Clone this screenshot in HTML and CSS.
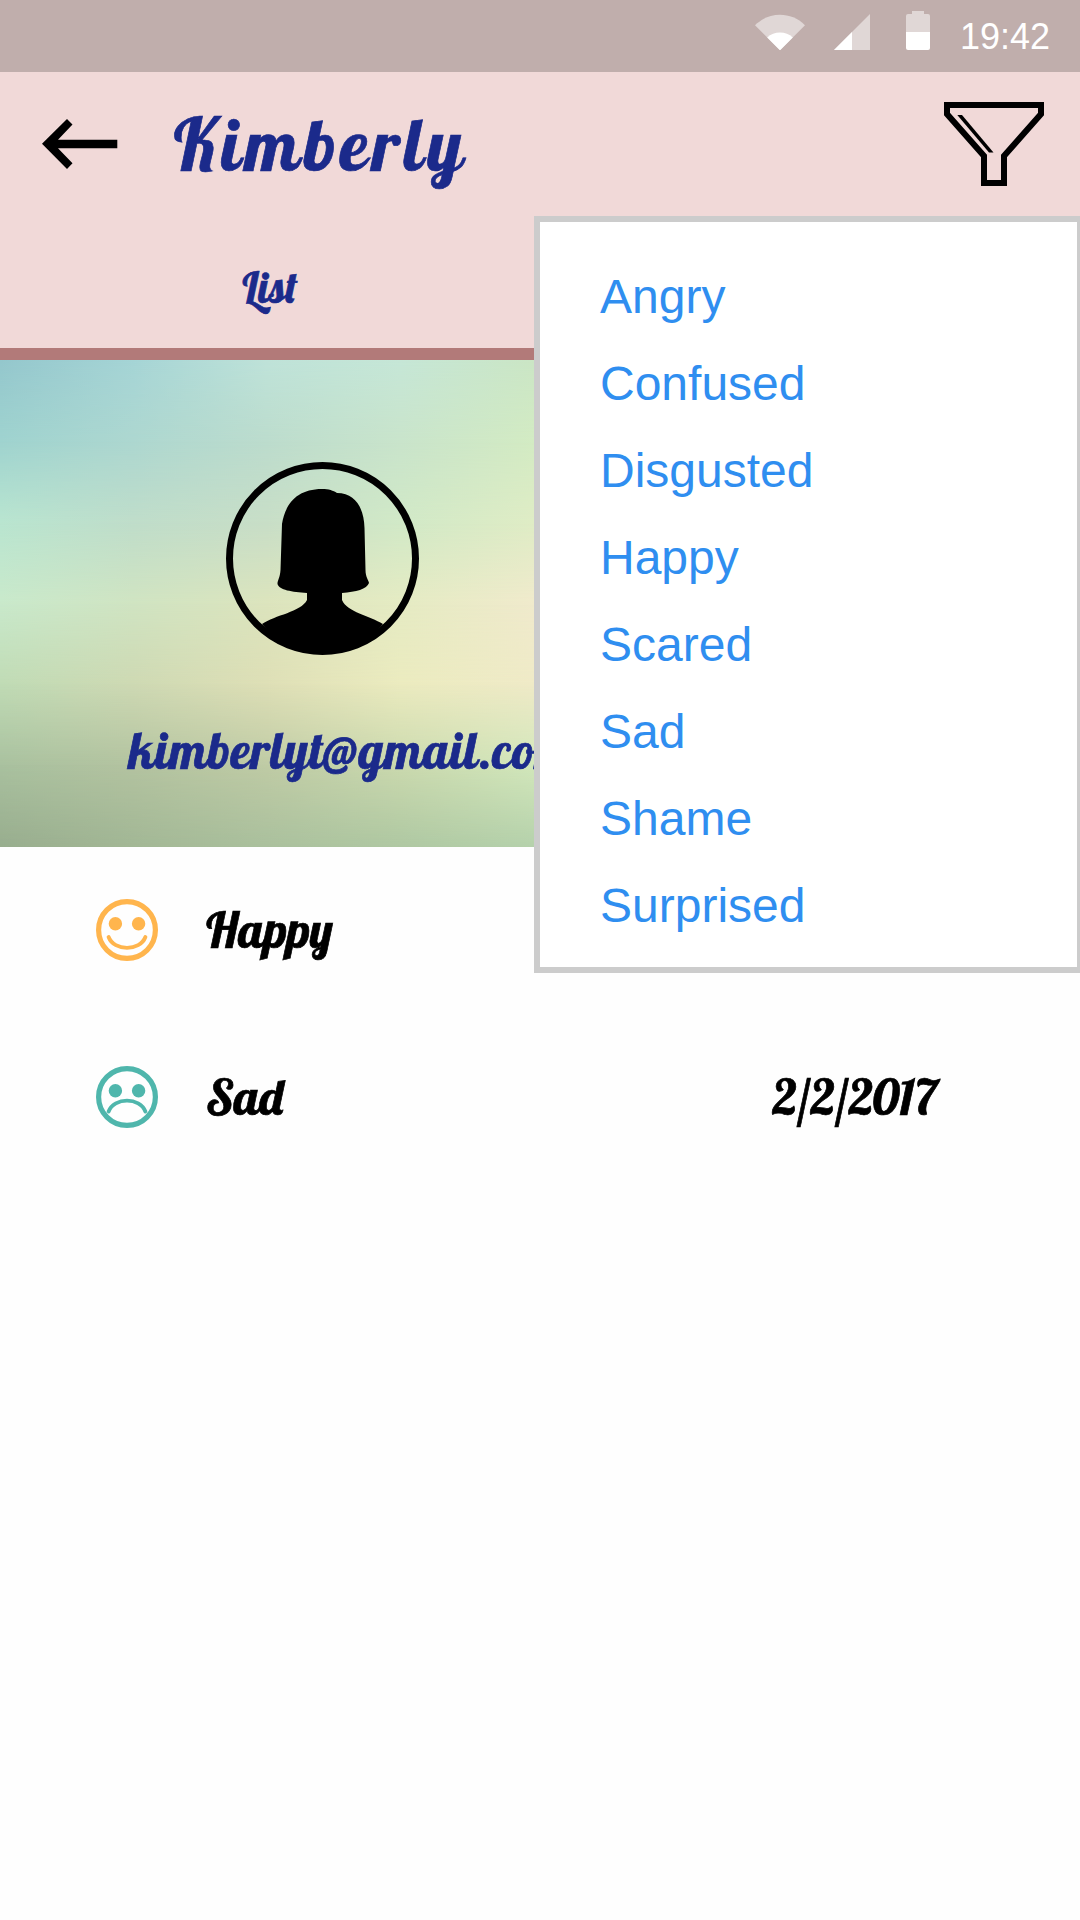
FILE: index.html
```html
<!DOCTYPE html>
<html lang="en">
<head>
<meta charset="utf-8">
<title>Kimberly</title>
<link rel="stylesheet" href="styles.css">
</head>
<body>
<div class="screen">
  <div class="status-bar">
    <svg class="wifi" width="50" height="40" viewBox="0 0 50 40">
      <path d="M0 15.2C14 1.3 36 1.3 50 15.2L25 40.3Z" fill="#fff" fill-opacity=".5"/>
      <path d="M12.2 27.4C19 20.7 31 20.7 37.8 27.4L25 40.3Z" fill="#fff"/>
    </svg>
    <svg class="signal" width="36" height="40" viewBox="0 0 36 40">
      <path d="M0 40L36 4V40Z" fill="#fff" fill-opacity=".5"/>
      <path d="M0 40L18 22V40Z" fill="#fff"/>
    </svg>
    <svg class="battery" width="24" height="40" viewBox="0 0 24 40">
      <path d="M6 1H18V4H22Q24 4 24 6V22H0V6Q0 4 2 4H6Z" fill="#fff" fill-opacity=".5"/>
      <path d="M0 22H24V38Q24 40 22 40H2Q0 40 0 38Z" fill="#fff"/>
    </svg>
    <span class="clock">19:42</span>
  </div>

  <header class="header">
    <div class="title-row">
      <svg class="back" width="76" height="52" viewBox="0 0 76 52">
        <path d="M0 25.7L25 1L30.5 6.5L16 21.7H75.3V30.2H16L30.5 45.2L25 51Z"/>
      </svg>
      <h1 class="title">Kimberly</h1>
      <svg class="filter" width="100" height="84" viewBox="0 0 100 84">
        <path d="M3 3H97V12L60 54V81H40V54L3 12Z" fill="none" stroke="#000" stroke-width="6"/>
        <path d="M13.3 13H18L49.5 50.5H45Z"/>
      </svg>
    </div>
    <nav class="tabs"><span class="tab">List</span></nav>
  </header>

  <section class="profile">
    <svg class="backdrop" viewBox="0 0 534 487" preserveAspectRatio="none">
      <defs>
        <linearGradient id="fade" gradientUnits="userSpaceOnUse" x1="0" y1="0" x2="0" y2="81"><stop stop-color="#fff" stop-opacity="0"/><stop offset="1" stop-color="#fff"/></linearGradient>
        <mask id="down" class="fade-mask" maskUnits="userSpaceOnUse" x="0" y="0" width="534" height="487"><rect width="534" height="487" fill="url(#fade)"/></mask>
        <linearGradient id="r0"><stop stop-color="#94c7cd"/><stop offset=".25" stop-color="#a6d5d6"/><stop offset=".5" stop-color="#bfe3d9"/><stop offset=".75" stop-color="#c6e7d7"/><stop offset="1" stop-color="#cbe6c5"/></linearGradient>
        <linearGradient id="r1"><stop stop-color="#9fd3cf"/><stop offset=".25" stop-color="#add7d0"/><stop offset=".5" stop-color="#bcdccd"/><stop offset=".75" stop-color="#c9e4cb"/><stop offset="1" stop-color="#d3ebc3"/></linearGradient>
        <linearGradient id="r2"><stop stop-color="#b9e5d0"/><stop offset=".25" stop-color="#bfddca"/><stop offset=".5" stop-color="#c8dec7"/><stop offset=".75" stop-color="#d1e9c7"/><stop offset="1" stop-color="#dfecc5"/></linearGradient>
        <linearGradient id="r3"><stop stop-color="#c9e9cb"/><stop offset=".25" stop-color="#d0e4c2"/><stop offset=".5" stop-color="#dce4bd"/><stop offset=".75" stop-color="#e5ebc3"/><stop offset="1" stop-color="#f0eacc"/></linearGradient>
        <linearGradient id="r4"><stop stop-color="#c0dbb5"/><stop offset=".25" stop-color="#ced9b3"/><stop offset=".5" stop-color="#dedfb6"/><stop offset=".75" stop-color="#ebebbf"/><stop offset="1" stop-color="#efeac7"/></linearGradient>
        <linearGradient id="r5"><stop stop-color="#a9c19f"/><stop offset=".25" stop-color="#b3c3a0"/><stop offset=".5" stop-color="#bfcba5"/><stop offset=".75" stop-color="#cad9ae"/><stop offset="1" stop-color="#d2e7bb"/></linearGradient>
        <linearGradient id="r6"><stop stop-color="#98ad8e"/><stop offset=".25" stop-color="#a2b795"/><stop offset=".5" stop-color="#aac09d"/><stop offset=".75" stop-color="#afc8a2"/><stop offset="1" stop-color="#b5d1ab"/></linearGradient>
      </defs>
      <rect width="534" height="487" fill="url(#r0)"/>
      <g mask="url(#down)"><rect width="534" height="487" fill="url(#r1)"/></g>
      <g transform="translate(0 81)"><g mask="url(#down)"><rect width="534" height="406" fill="url(#r2)"/></g></g>
      <g transform="translate(0 162)"><g mask="url(#down)"><rect width="534" height="325" fill="url(#r3)"/></g></g>
      <g transform="translate(0 243)"><g mask="url(#down)"><rect width="534" height="244" fill="url(#r4)"/></g></g>
      <g transform="translate(0 324)"><g mask="url(#down)"><rect width="534" height="163" fill="url(#r5)"/></g></g>
      <g transform="translate(0 405)"><g mask="url(#down)"><rect width="534" height="82" fill="url(#r6)"/></g></g>
    </svg>
    <svg class="avatar" width="193" height="193" viewBox="0 0 193 193">
      <circle cx="96.5" cy="96.5" r="93" fill="none" stroke="#000" stroke-width="7"/>
      <path d="M96 27C103 27 107 28.5 111 31C130 31 138 47 138.5 66L139.5 108C139.5 115 142.500 118 143 121C141 127 130 130 116 131V138C121 150 144 154 157 162C142 181 120 192 96.500 192C73 192 51 181 36 162C49 153 75 150 81 138V131C66 130 53 128 51.500 122C51.500 118 54 116 54.500 108L56 62C59 43 70 27 96 27Z"/>
    </svg>
    <p class="email">kimberlyt@gmail.com</p>
  </section>

  <ul class="moods">
    <li class="mood">
      <svg class="face happy" width="62" height="62" viewBox="0 0 62 62">
        <circle class="line" cx="31" cy="31" r="28.400" stroke-width="5.200"/>
        <circle class="eye" cx="19.4" cy="24.7" r="6.700"/><circle class="eye" cx="42.6" cy="24.7" r="6.700"/>
        <path class="line" d="M12.600 38C18 52.500 44 52.500 49.400 38" stroke-width="3.900"/>
      </svg>
      <span class="name">Happy</span>
    </li>
    <li class="mood">
      <svg class="face sad" width="62" height="62" viewBox="0 0 62 62">
        <circle class="line" cx="31" cy="31" r="28.400" stroke-width="5.200"/>
        <circle class="eye" cx="19.4" cy="24.7" r="6.700"/><circle class="eye" cx="42.6" cy="24.7" r="6.700"/>
        <path class="line" d="M12.600 45.500C18 31 44 31 49.400 45.500" stroke-width="3.900"/>
      </svg>
      <span class="name">Sad</span>
      <span class="date">2/2/2017</span>
    </li>
  </ul>

  <ul class="menu">
    <li>Angry</li>
    <li>Confused</li>
    <li>Disgusted</li>
    <li>Happy</li>
    <li>Scared</li>
    <li>Sad</li>
    <li>Shame</li>
    <li>Surprised</li>
  </ul>
</div>
</body>
</html>
```
FILE: styles.css
```css
* { box-sizing: border-box; margin: 0; padding: 0; }
ul { list-style: none; }
svg { display: block; flex: none; }

body { background: #fefefe; }

.screen {
  position: relative;
  width: 1080px;
  height: 1920px;
  overflow: hidden;
  background: #fefefe;
  font-family: Lobster, "Liberation Serif", serif;
}

.status-bar {
  display: flex;
  justify-content: flex-end;
  height: 72px;
  padding: 10px 30px 0 0;
  background: #c0aeac;
}
.signal { margin-left: 29px; }
.battery { margin-left: 36px; }
.clock {
  width: 90px;
  margin-left: 30px;
  font: 36px/53px "Liberation Sans", sans-serif;
  color: #fff;
}

.header {
  height: 288px;
  background: #f1d9d8;
  border-bottom: 12px solid #b27a79;
  color: #1b2a8b;
}
.title-row {
  display: flex;
  align-items: center;
  height: 144px;
  padding: 0 36px 0 41.5px;
}
.title {
  flex: 1;
  padding-left: 56.5px;
  font-size: 72px;
  font-weight: normal;
  line-height: 144px;
  letter-spacing: 4.5px;
}
.title, .tab, .email, .name, .date { -webkit-text-stroke: .7px currentColor; }
.tabs { display: flex; }
.tab {
  width: 540px;
  padding-top: 12px;
  text-align: center;
  font-size: 42px;
  line-height: 120px;
}

.profile {
  position: relative;
  height: 487px;
  padding-top: 102px;
  background: #cbe6c5;
}
.backdrop {
  position: absolute;
  top: 0;
  left: 0;
  width: 534px;
  height: 487px;
}
.fade-mask { mask-type: alpha; }
.avatar { position: relative; margin-left: 226px; }
.email {
  position: relative;
  margin: 64px 0 0 129px;
  font-size: 50px;
  line-height: 64px;
  letter-spacing: .75px;
  color: #1b2a8b;
}

.mood {
  display: flex;
  align-items: center;
  height: 168px;
  padding: 0 143px 0 96px;
  font-size: 49px;
}
.mood:first-child { height: 166px; }
.name { margin-left: 48px; padding-bottom: 2px; }
.date { margin-left: auto; padding-bottom: 2px; letter-spacing: -.6px; }
.face .line { fill: none; stroke: currentColor; stroke-linecap: round; }
.face .eye { fill: currentColor; }
.happy { color: #ffb54d; }
.sad { color: #4fb6ac; }

.menu {
  position: absolute;
  top: 216px;
  left: 534px;
  width: 549px;
  height: 757px;
  padding: 31px 0 18px 60px;
  border: 6px solid #ccc;
  background: #fff;
  font: 48px/87px "Liberation Sans", sans-serif;
  color: #2f8ef0;
}
```
